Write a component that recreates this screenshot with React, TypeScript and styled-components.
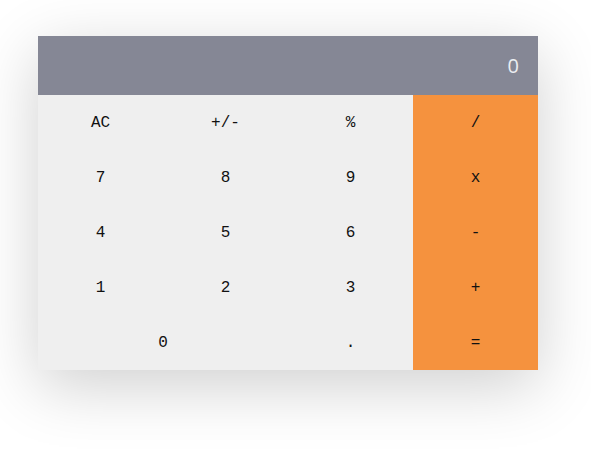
import React from "react";
import styled, { createGlobalStyle } from "styled-components";

const Global = createGlobalStyle`
  html, body { margin: 0; padding: 0; background: #ffffff; }
  body { width: 591px; height: 455px; overflow: hidden; }
`;

const Page = styled.div`
  padding: 36px 0 0 38px;
`;

const Calc = styled.div`
  width: 500px;
  box-shadow: 0 16px 60px rgba(0, 0, 0, 0.19);
`;

const Display = styled.div`
  height: 59px;
  background: #858795;
  color: #eceef2;
  font-family: "Open Sans", "Noto Sans", sans-serif;
  font-size: 20px;
  display: flex;
  align-items: center;
  justify-content: flex-end;
  padding-right: 19px;
  box-sizing: border-box;
`;

const Keys = styled.div`
  display: grid;
  grid-template-columns: repeat(4, 125px);
  grid-auto-rows: 55px;
`;

const Key = styled.div<{ $op?: boolean; $wide?: boolean }>`
  display: flex;
  align-items: center;
  justify-content: center;
  background: ${(p) => (p.$op ? "#f5923e" : "#efefef")};
  color: #111;
  font-family: "Liberation Mono", "Courier New", monospace;
  font-size: 16px;
  grid-column: ${(p) => (p.$wide ? "span 2" : "auto")};
`;

const rows: { label: string; op?: boolean; wide?: boolean }[] = [
  { label: "AC" }, { label: "+/-" }, { label: "%" }, { label: "/", op: true },
  { label: "7" }, { label: "8" }, { label: "9" }, { label: "x", op: true },
  { label: "4" }, { label: "5" }, { label: "6" }, { label: "-", op: true },
  { label: "1" }, { label: "2" }, { label: "3" }, { label: "+", op: true },
  { label: "0", wide: true }, { label: "." }, { label: "=", op: true },
];

export default function App() {
  return (
    <>
      <Global />
      <Page>
        <Calc>
          <Display>0</Display>
          <Keys>
            {rows.map((k, i) => (
              <Key key={i} $op={k.op} $wide={k.wide}>
                {k.label}
              </Key>
            ))}
          </Keys>
        </Calc>
      </Page>
    </>
  );
}
